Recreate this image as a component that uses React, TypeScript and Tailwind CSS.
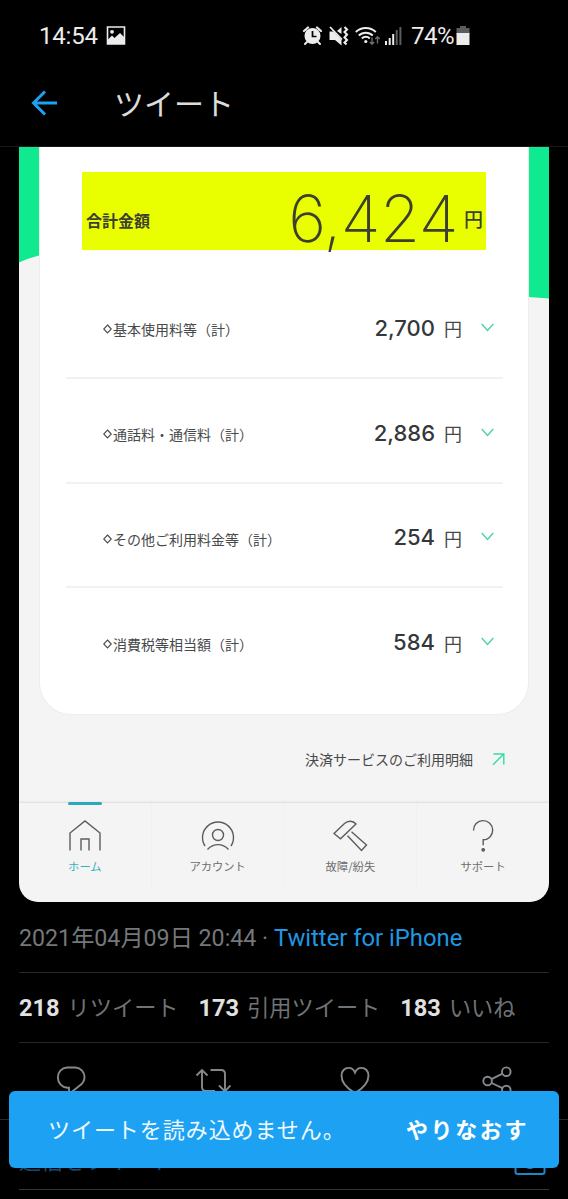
import type { ReactNode } from "react";

const jp = "font-['Noto_Sans_CJK_JP',sans-serif]";
const mixed = "font-[Roboto,'Noto_Sans_CJK_JP',sans-serif]";
const num = "font-[Inter,'Noto_Sans_CJK_JP',sans-serif]";

const charges = [
  { label: "基本使用料等（計）", amount: "2,700" },
  { label: "通話料・通信料（計）", amount: "2,886" },
  { label: "その他ご利用料金等（計）", amount: "254" },
  { label: "消費税等相当額（計）", amount: "584" },
];

function StatusBar() {
  return (
    <div className={`flex h-[72px] shrink-0 items-center pl-[39px] text-[24px] leading-none text-[#ececec] ${mixed}`}>
      <span className="w-[67px] tracking-[-0.2px]">14:54</span>
      <svg className="-mt-px h-5 w-5" viewBox="0 0 20 20">
        <path d="M1.500 1h17v17h-17z" fill="none" stroke="#ececec" strokeWidth="1.6" />
        <path d="M2 13.500l4-4 2.5 2.5 5.500-5 4 4v7H2z" fill="#ececec" />
        <circle cx="6" cy="5.800" r="1.900" fill="#ececec" />
      </svg>
      <svg className="ml-[176px] h-5 w-[22px]" viewBox="0 0 22 20">
        <g fill="none" stroke="#ececec" strokeLinecap="round">
          <path d="M2 5l4-3.500M19 5l-4-3.500" strokeWidth="2.200" />
          <path d="M5 16l-2 2M16 16l2 2" strokeWidth="2" />
        </g>
        <circle cx="10.500" cy="10" r="8" fill="#ececec" />
        <path d="M10.500 5v5.500h4" fill="none" stroke="#000" strokeWidth="1.700" />
      </svg>
      <svg className="ml-[4px] h-5 w-[22px]" viewBox="0 0 22 20">
        <path d="M1.500 5.500h4l8 8.500v5.500L7 14H1.500z" fill="#ececec" />
        <path d="M9 5l4.500-4v7z" fill="#ececec" />
        <path d="M2 1l12 12.500" stroke="#ececec" strokeWidth="1.800" />
        <path d="M16.500 1l2.500 2.500-2.500 2.500 2.500 2.500-2.500 3 2.500 2.500-2.500 2.500 2 2" fill="none" stroke="#ececec" strokeWidth="2.100" />
      </svg>
      <svg className="ml-[5px] h-5 w-[26px]" viewBox="0 0 26 20">
        <g fill="none" stroke="#ececec" strokeWidth="2">
          <path d="M.8 6a14.500 14.500 0 0 1 20 0" />
          <path d="M3.800 9.500a10 10 0 0 1 14 0" />
          <path d="M6.800 12.500a5.700 5.700 0 0 1 8 0" />
        </g>
        <circle cx="10.800" cy="15.500" r="1.600" fill="#ececec" />
        <path d="M17 11.500v6.500M14.800 16l2.200 2.200 2.200-2.200M22.500 17.500V11M20.300 13l2.200-2.200 2.200 2.200" fill="none" stroke="#6b6b6b" strokeWidth="1.400" />
      </svg>
      <svg className="ml-[4px] h-5 w-[18px]" viewBox="0 0 18 20">
        <path d="M1 15v4M4.700 12v7M8.200 8v11" stroke="#ececec" strokeWidth="2" />
        <path d="M11.700 4v15M15.400 1v18" stroke="#5c5c5c" strokeWidth="2" />
      </svg>
      <span className="ml-[8px] w-[45px] tracking-[-0.5px]">74%</span>
      <svg className="h-5 w-[14px]" viewBox="0 0 14 20">
        <path d="M4 0h6v2h3.500v6H.500V2H4z" fill="#5c5c5c" />
        <path d="M.500 7h13v12H.500z" fill="#ececec" />
      </svg>
    </div>
  );
}

function Header() {
  return (
    <div className="flex h-[75px] shrink-0 border-b border-[#161819] pl-[31px]">
      <div className="flex h-[62px] items-center">
        <svg className="h-7 w-7" viewBox="0 0 28 28" fill="none" stroke="#1da1f2" strokeWidth="3">
          <path d="M14 2.500L2.500 14 14 25.500M2.500 14H26" />
        </svg>
        <h1 className={`-mt-[3px] ml-[55px] text-[30px] leading-none font-normal text-[#dcdcdc] ${jp}`}>ツイート</h1>
      </div>
    </div>
  );
}

function ChargeRow({ label, amount }: { label: string; amount: string }) {
  return (
    <div className="mr-[25px] ml-[26px] flex h-[104.8px] items-center border-b-2 border-[#f1f1f2] pl-[37px] pt-[5px] last:border-transparent">
      <span className={`flex items-center pt-[3px] text-[14px] leading-none text-[#47494b] ${jp}`}>
        <svg className="mr-[1px] h-[10px] w-[9px]" viewBox="0 0 9 10" fill="none" stroke="#47494b" strokeWidth="1.100">
          <path d="M4.500 1L8.300 5 4.500 9 .700 5z" />
        </svg>
        {label}
      </span>
      <span className={`ml-auto text-[22px] leading-none font-medium text-[#35383b] ${num}`}>{amount}</span>
      <span className={`ml-[9px] w-[18px] pt-px text-[18px] leading-none text-[#47494b] ${jp}`}>円</span>
      <svg className="-mt-px ml-[19px] mr-[9px] h-[9px] w-[13px]" viewBox="0 0 13 9" fill="none" stroke="#4bd3a5" strokeWidth="1.400">
        <path d="M.700 1l5.800 6.500L12.300 1" />
      </svg>
    </div>
  );
}

function NavItem({ label, active, children }: { label: string; active?: boolean; children: ReactNode }) {
  return (
    <div className="flex flex-1 flex-col items-center border-r border-[#f1f1f1] last:border-0">
      <span className={`-mt-px h-[3px] w-[34px] rounded-full ${active ? "bg-[#2ba9bb]" : ""}`} />
      <svg className="mt-[13px] h-9 w-9" viewBox="0 0 36 36" fill="none" stroke="#5b5c5e" strokeWidth="1.400">
        {children}
      </svg>
      <span className={`mt-[7px] text-[11.3px] leading-none ${jp} ${active ? "text-[#36b0c0]" : "text-[#6d6e70]"}`}>{label}</span>
    </div>
  );
}

function BillCard() {
  return (
    <div className="mx-[19px] flex h-[755px] shrink-0 flex-col overflow-hidden rounded-b-[19px] bg-[#f4f4f4]">
      <div className="flex h-[568px]">
        <svg className="h-[160px] w-5 shrink-0" viewBox="0 0 20 160">
          <path d="M0 0h20v108.500Q10 111 0 115.500z" fill="#0fea91" />
        </svg>
        <div className="flex-1 overflow-hidden rounded-b-[32px] border-x border-b border-[#ededea] bg-white">
          <div className="mt-[25px] ml-[42px] flex h-[78px] w-[404px] items-center bg-[#e9ff00] text-[#3d402f]">
            <span className={`ml-[4px] mt-[18px] text-[16px] leading-none font-bold ${jp}`}>合計金額</span>
            <span className={`ml-auto mt-[14px] text-[65px] leading-none font-[250] tracking-[-0.5px] ${num}`}>6,424</span>
            <span className={`mr-[3px] ml-[6px] mt-[15px] text-[19px] leading-none font-medium ${jp}`}>円</span>
          </div>
          <div className="mt-[24px]">
            {charges.map(c => <ChargeRow key={c.label} label={c.label} amount={c.amount} />)}
          </div>
        </div>
        <svg className="h-[160px] w-5 shrink-0" viewBox="0 0 20 160">
          <path d="M0 0h20v151.500L0 150z" fill="#0fea91" />
        </svg>
      </div>
      <div className={`flex h-[87px] items-center justify-end pt-[1px] pr-[44px] text-[14px] leading-none text-[#47494b] ${jp}`}>
        決済サービスのご利用明細
        <svg className="ml-[19px] h-[13px] w-[13px]" viewBox="0 0 13 13" fill="none" stroke="#33dc9f" strokeWidth="1.400">
          <path d="M1.500 1h10.300v10.500M11.800 1L1 11.800" />
        </svg>
      </div>
      <div className="flex h-[86px] border-t border-[#e2e2e2] shadow-[0_-1px_1px_#ececec]">
        <NavItem label="ホーム" active>
          <path d="M3 32.500V15L18 3l15 12v17.500M14 32.500V21h8v11.500" />
        </NavItem>
        <NavItem label="アカウント">
          <path d="M5 28A15.500 15.500 0 1 1 31 28" />
          <circle cx="18" cy="17" r="5.500" />
          <path d="M7.500 31.500c6-6.500 15-6.500 21 0" />
        </NavItem>
        <NavItem label="故障/紛失">
          <path d="M2 15.500L12.500 5.500C16 2.200 21 2.500 24 6L8.500 20.800z" />
          <path d="M19.500 13.800L34.500 27 29.500 32.500 15.500 17.800" />
        </NavItem>
        <NavItem label="サポート">
          <path d="M8.500 12.500a9.600 9.600 0 1 1 9.700 9.300v5.500" />
          <circle cx="18.200" cy="31.800" r="1.200" fill="#5b5c5e" />
        </NavItem>
      </div>
    </div>
  );
}

function Stat({ count, label }: { count: number; label: string }) {
  return (
    <span className="flex items-center">
      <b className="mr-[8px] font-bold text-[#e1e1e1]">{count}</b>
      <span className="text-[22.2px]">{label}</span>
    </span>
  );
}

function Actions() {
  return (
    <div className="grid h-[77px] shrink-0 grid-cols-4 justify-items-center border-b border-[#26292b] pt-[22px]">
      <svg className="h-[30px] w-[30px]" viewBox="0 0 30 30" fill="none" stroke="#85898c" strokeWidth="1.900">
        <path d="M11 2.500h8.500a9.400 9.400 0 0 1 9 9.800c0 3.800-2 6.400-5 8.400L13 29v-6.200h-1.500C6 22.500 1.900 18 1.900 12.500A9.600 9.600 0 0 1 11 2.500z" />
      </svg>
      <svg className="h-[30px] w-9" viewBox="0 0 36 30" fill="none" stroke="#85898c" strokeWidth="1.900">
        <path d="M1.500 10.500L7 5l5.500 5.500M7 5v17q0 4 4 4h9M15.500 5h10.500q4 0 4 4v17M24 20.500l6 6 5.500-6" />
      </svg>
      <svg className="h-[30px] w-[30px]" viewBox="0 0 30 30" fill="none" stroke="#85898c" strokeWidth="1.900">
        <path d="M15 28C8 24 1.500 18 1.500 10.500 1.500 6 4.700 2.900 8.500 2.900c2.800 0 5.300 1.800 6.500 4.700 1.200-2.900 3.700-4.700 6.500-4.700 3.800 0 7 3.100 7 7.600C28.500 18 22 24 15 28z" />
      </svg>
      <svg className="h-[30px] w-[30px]" viewBox="0 0 30 30" fill="none" stroke="#85898c" strokeWidth="1.900">
        <circle cx="5.600" cy="16" r="4.300" />
        <circle cx="24.300" cy="6.700" r="4.300" />
        <circle cx="24.300" cy="25" r="4.300" />
        <path d="M9.500 14.200l11-5.500M9.500 18l11 5.200" />
      </svg>
    </div>
  );
}

function Toast() {
  return (
    <div className={`absolute top-[1091px] left-[9px] flex h-[77px] w-[550px] items-center rounded-[6px] bg-[#1da1f2] pb-[4px] pl-[39px] text-[22px] leading-none text-[#eefaff] ${jp}`}>
      <span className="tracking-[0.95px]">ツイートを読み込めません。</span>
      <button className="mr-[30px] ml-auto font-bold tracking-[2.6px] text-white">やりなおす</button>
    </div>
  );
}

export default function App() {
  return (
    <div lang="ja" className="relative flex h-[1199px] w-[568px] flex-col overflow-hidden bg-black">
      <StatusBar />
      <Header />
      <BillCard />
      <div className={`mx-[19px] flex h-[71px] shrink-0 items-center border-b border-[#26292b] pt-[4px] text-[23.2px] leading-none text-[#74787b] ${mixed}`}>
        <p className="whitespace-pre">2021年04月09日 20:44 · <span className="text-[23.8px] text-[#1f97e2]">Twitter for iPhone</span></p>
      </div>
      <div className={`mx-[19px] flex h-[70px] shrink-0 items-center gap-[20px] border-b border-[#26292b] pt-[2px] text-[23.6px] leading-none whitespace-nowrap text-[#6f7376] ${mixed}`}>
        <Stat count={218} label="リツイート" />
        <Stat count={173} label="引用ツイート" />
        <Stat count={183} label="いいね" />
      </div>
      <Actions />
      <div className={`mx-[19px] flex h-[70px] shrink-0 items-center justify-between border-b border-[#34373a] text-[22px] leading-none text-[#134b72] ${jp}`}>
        <span className="pt-[8px]">返信をツイート</span>
        <svg className="mt-[12px] mr-[3px] h-8 w-8" viewBox="0 0 32 32" fill="none" stroke="#1b86cb" strokeWidth="2">
          <rect x="1.500" y="7" width="29" height="22" rx="2" />
          <circle cx="16" cy="17" r="6" />
        </svg>
      </div>
      <Toast />
    </div>
  );
}
